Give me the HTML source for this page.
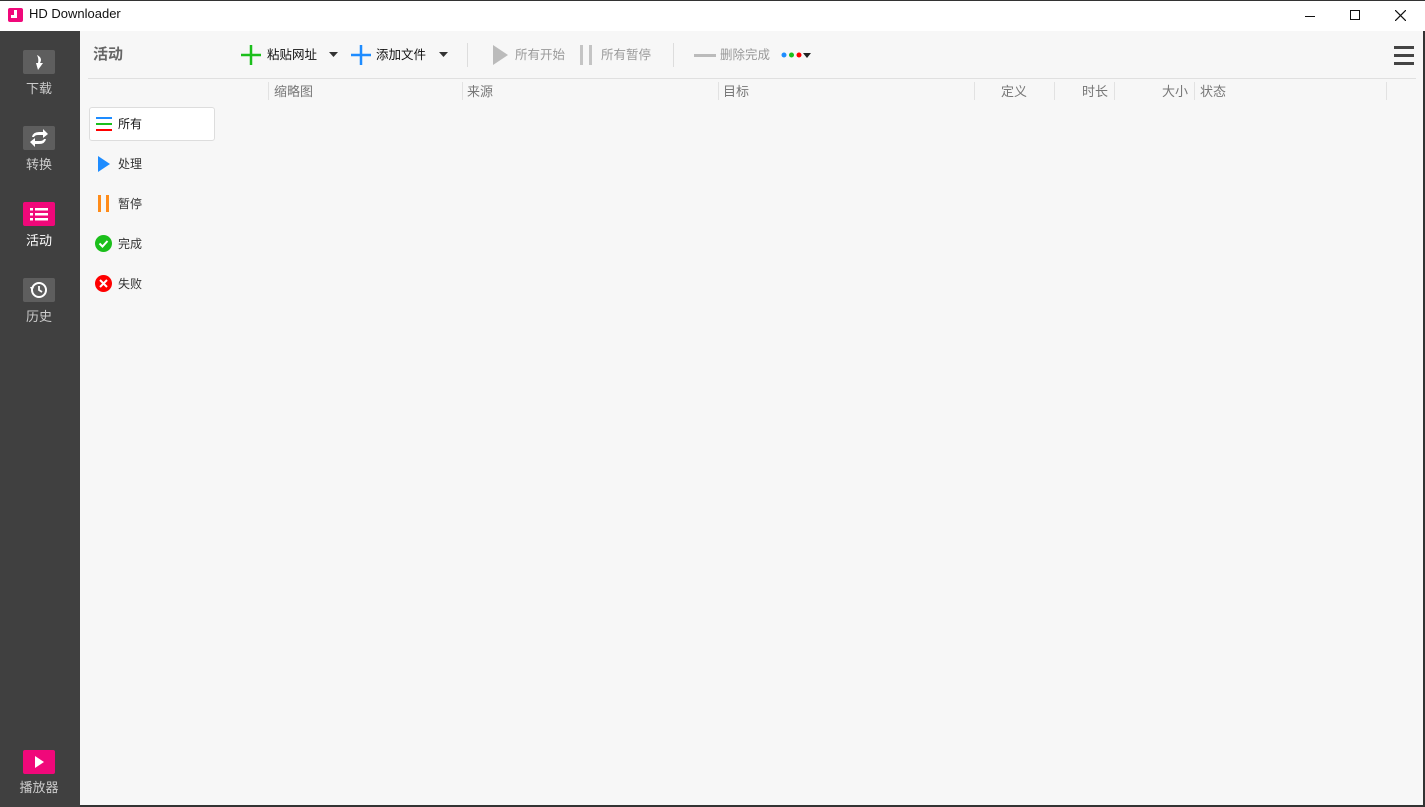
<!DOCTYPE html>
<html><head><meta charset="utf-8"><style>
*{margin:0;padding:0;box-sizing:border-box}
body{width:1425px;height:807px;overflow:hidden;background:#f7f7f7;font-family:"Liberation Sans","Noto Sans CJK SC",sans-serif;position:relative;font-size:13px;color:#222}
.abs{position:absolute}
#title{left:0;top:0;width:1425px;height:31px;background:#fff;border-top:1px solid #333}
#side{left:0;top:31px;width:80px;height:776px;background:#404040}
.sb{position:absolute;left:23px;width:32px;height:24px;background:#5e5e5e;border-radius:2px}
.sl{position:absolute;left:0;width:78px;text-align:center;color:#ccc;font-size:13px}
.hd{position:absolute;top:81px;color:#777;font-size:13px}
.sep{position:absolute;top:82px;width:1px;height:18px;background:#e2e2e2}
.fi{position:absolute;left:118px;font-size:12px;color:#333}
.tb{position:absolute;top:44px;font-size:12.5px}
</style></head><body>
<div id="title" class="abs">
 <div class="abs" style="left:8px;top:7px;width:15px;height:14px;background:#f0087a;border-radius:2px"><div class="abs" style="left:6px;top:2px;width:3px;height:8px;background:#fff"></div><div class="abs" style="left:3px;top:7px;width:4px;height:3px;background:#fff"></div></div>
 <div class="abs" style="left:29px;top:5px;font-size:13px;color:#111">HD Downloader</div>
 <div class="abs" style="left:1305px;top:15px;width:10px;height:1px;background:#111"></div>
 <div class="abs" style="left:1350px;top:9px;width:10px;height:10px;border:1px solid #111"></div>
 <svg class="abs" style="left:1395px;top:9px" width="11" height="11"><path d="M0 0L11 11M11 0L0 11" stroke="#111" stroke-width="1.2"/></svg>
</div>
<div class="abs" style="right:0;top:31px;width:2px;height:776px;background:#333"></div>
<div class="abs" style="left:0;bottom:0;width:1425px;height:2px;background:#333"></div>
<div id="side" class="abs">
 <div class="sb" style="top:19px"><svg width="32" height="24"><path d="M14 5 Q20 8 17 13 L20 13 L15 20 L13 13 L15 13 Q16 9 14 5Z" fill="#fff"/></svg></div>
 <div class="sl" style="top:47px">下载</div>
 <div class="sb" style="top:95px"><svg width="32" height="24"><path d="M9 11 Q10 6 16 6 L20 6 L20 3 L25 8 L20 12 L20 9 L15 9 Q12 9 11 11Z M23 13 Q22 18 16 18 L12 18 L12 21 L7 16 L12 12 L12 15 L17 15 Q20 15 21 13Z" fill="#fff"/></svg></div>
 <div class="sl" style="top:123px">转换</div>
 <div class="sb" style="top:171px;background:#f0087a"><svg width="32" height="24"><g fill="#fff"><rect x="7" y="6" width="3" height="2.5"/><rect x="12" y="6" width="13" height="2.5"/><rect x="7" y="11" width="3" height="2.5"/><rect x="12" y="11" width="13" height="2.5"/><rect x="7" y="16" width="3" height="2.5"/><rect x="12" y="16" width="13" height="2.5"/></g></svg></div>
 <div class="sl" style="top:199px;color:#fff">活动</div>
 <div class="sb" style="top:247px"><svg width="32" height="24"><circle cx="16" cy="12" r="7" fill="none" stroke="#fff" stroke-width="2"/><path d="M16 8V12L19 14" stroke="#fff" stroke-width="1.8" fill="none"/><path d="M7 9L9 13L11 9Z" fill="#fff"/></svg></div>
 <div class="sl" style="top:275px">历史</div>
 <div class="sb" style="top:719px;background:#f0087a"><svg width="32" height="24"><path d="M12 6L21 12L12 18Z" fill="#fff"/></svg></div>
 <div class="sl" style="top:746px">播放器</div>
</div>
<div class="abs" style="left:93px;top:43px;font-size:15px;color:#666;font-weight:bold">活动</div>
<svg class="abs" style="left:240px;top:44px" width="22" height="22"><path d="M11 1V21M1 11H21" stroke="#1bbf1b" stroke-width="2.5"/></svg>
<div class="tb" style="left:267px;color:#111">粘贴网址</div>
<svg class="abs" style="left:329px;top:52px" width="9" height="5"><path d="M0 0H9L4.5 5Z" fill="#333"/></svg>
<svg class="abs" style="left:350px;top:44px" width="22" height="22"><path d="M11 1V21M1 11H21" stroke="#1e8cff" stroke-width="2.5"/></svg>
<div class="tb" style="left:376px;color:#111">添加文件</div>
<svg class="abs" style="left:439px;top:52px" width="9" height="5"><path d="M0 0H9L4.5 5Z" fill="#333"/></svg>
<div class="abs" style="left:467px;top:43px;width:1px;height:24px;background:#ddd"></div>
<svg class="abs" style="left:492px;top:44px" width="18" height="22"><path d="M1 1L16 11L1 21Z" fill="#bbb"/></svg>
<div class="tb" style="left:515px;color:#999">所有开始</div>
<div class="abs" style="left:580px;top:45px;width:3px;height:20px;background:#c4c4c4"></div>
<div class="abs" style="left:589px;top:45px;width:3px;height:20px;background:#c4c4c4"></div>
<div class="tb" style="left:601px;color:#999">所有暂停</div>
<div class="abs" style="left:673px;top:43px;width:1px;height:24px;background:#ddd"></div>
<div class="abs" style="left:694px;top:54px;width:22px;height:3px;background:#bbb"></div>
<div class="tb" style="left:720px;color:#999">删除完成</div>
<svg class="abs" style="left:781px;top:50px" width="36" height="10"><circle cx="3" cy="5" r="2.5" fill="#1e8cff"/><circle cx="10.5" cy="5" r="2.5" fill="#1bbf1b"/><circle cx="18" cy="5" r="2.5" fill="#f00"/><path d="M22 3H30L26 8Z" fill="#222"/></svg>
<div class="abs" style="left:1394px;top:46px;width:20px;height:3px;background:#444"></div>
<div class="abs" style="left:1394px;top:54px;width:20px;height:3px;background:#444"></div>
<div class="abs" style="left:1394px;top:62px;width:20px;height:3px;background:#444"></div>
<div class="abs" style="left:88px;top:78px;width:1328px;height:1px;background:#e0e0e0"></div>
<div class="sep" style="left:268px"></div><div class="sep" style="left:462px"></div><div class="sep" style="left:718px"></div><div class="sep" style="left:974px"></div><div class="sep" style="left:1054px"></div><div class="sep" style="left:1114px"></div><div class="sep" style="left:1194px"></div><div class="sep" style="left:1386px"></div>
<div class="hd" style="left:274px">缩略图</div><div class="hd" style="left:467px">来源</div><div class="hd" style="left:723px">目标</div><div class="hd" style="left:1001px">定义</div><div class="hd" style="left:1082px">时长</div><div class="hd" style="left:1162px">大小</div><div class="hd" style="left:1200px">状态</div>
<div class="abs" style="left:89px;top:107px;width:126px;height:34px;background:#fff;border:1px solid #ddd;border-radius:3px"></div>
<div class="abs" style="left:96px;top:117px;width:16px;height:2px;background:#1e8cff"></div>
<div class="abs" style="left:96px;top:123px;width:16px;height:2px;background:#1bbf1b"></div>
<div class="abs" style="left:96px;top:129px;width:16px;height:2px;background:#f00"></div>
<div class="fi" style="top:115px;color:#111">所有</div>
<svg class="abs" style="left:97px;top:156px" width="14" height="16"><path d="M1 0L13 8L1 16Z" fill="#1e8cff"/></svg>
<div class="fi" style="top:155px">处理</div>
<div class="abs" style="left:98px;top:195px;width:3px;height:17px;background:#ff8c1a"></div>
<div class="abs" style="left:106px;top:195px;width:3px;height:17px;background:#ff8c1a"></div>
<div class="fi" style="top:195px">暂停</div>
<svg class="abs" style="left:95px;top:235px" width="17" height="17"><circle cx="8.5" cy="8.5" r="8.5" fill="#1bbf1b"/><path d="M4.5 8.5L7.5 11.5L12.5 6" stroke="#fff" stroke-width="2" fill="none"/></svg>
<div class="fi" style="top:235px">完成</div>
<svg class="abs" style="left:95px;top:275px" width="17" height="17"><circle cx="8.5" cy="8.5" r="8.5" fill="#f00"/><path d="M5 5L12 12M12 5L5 12" stroke="#fff" stroke-width="2"/></svg>
<div class="fi" style="top:275px">失败</div>
</body></html>
